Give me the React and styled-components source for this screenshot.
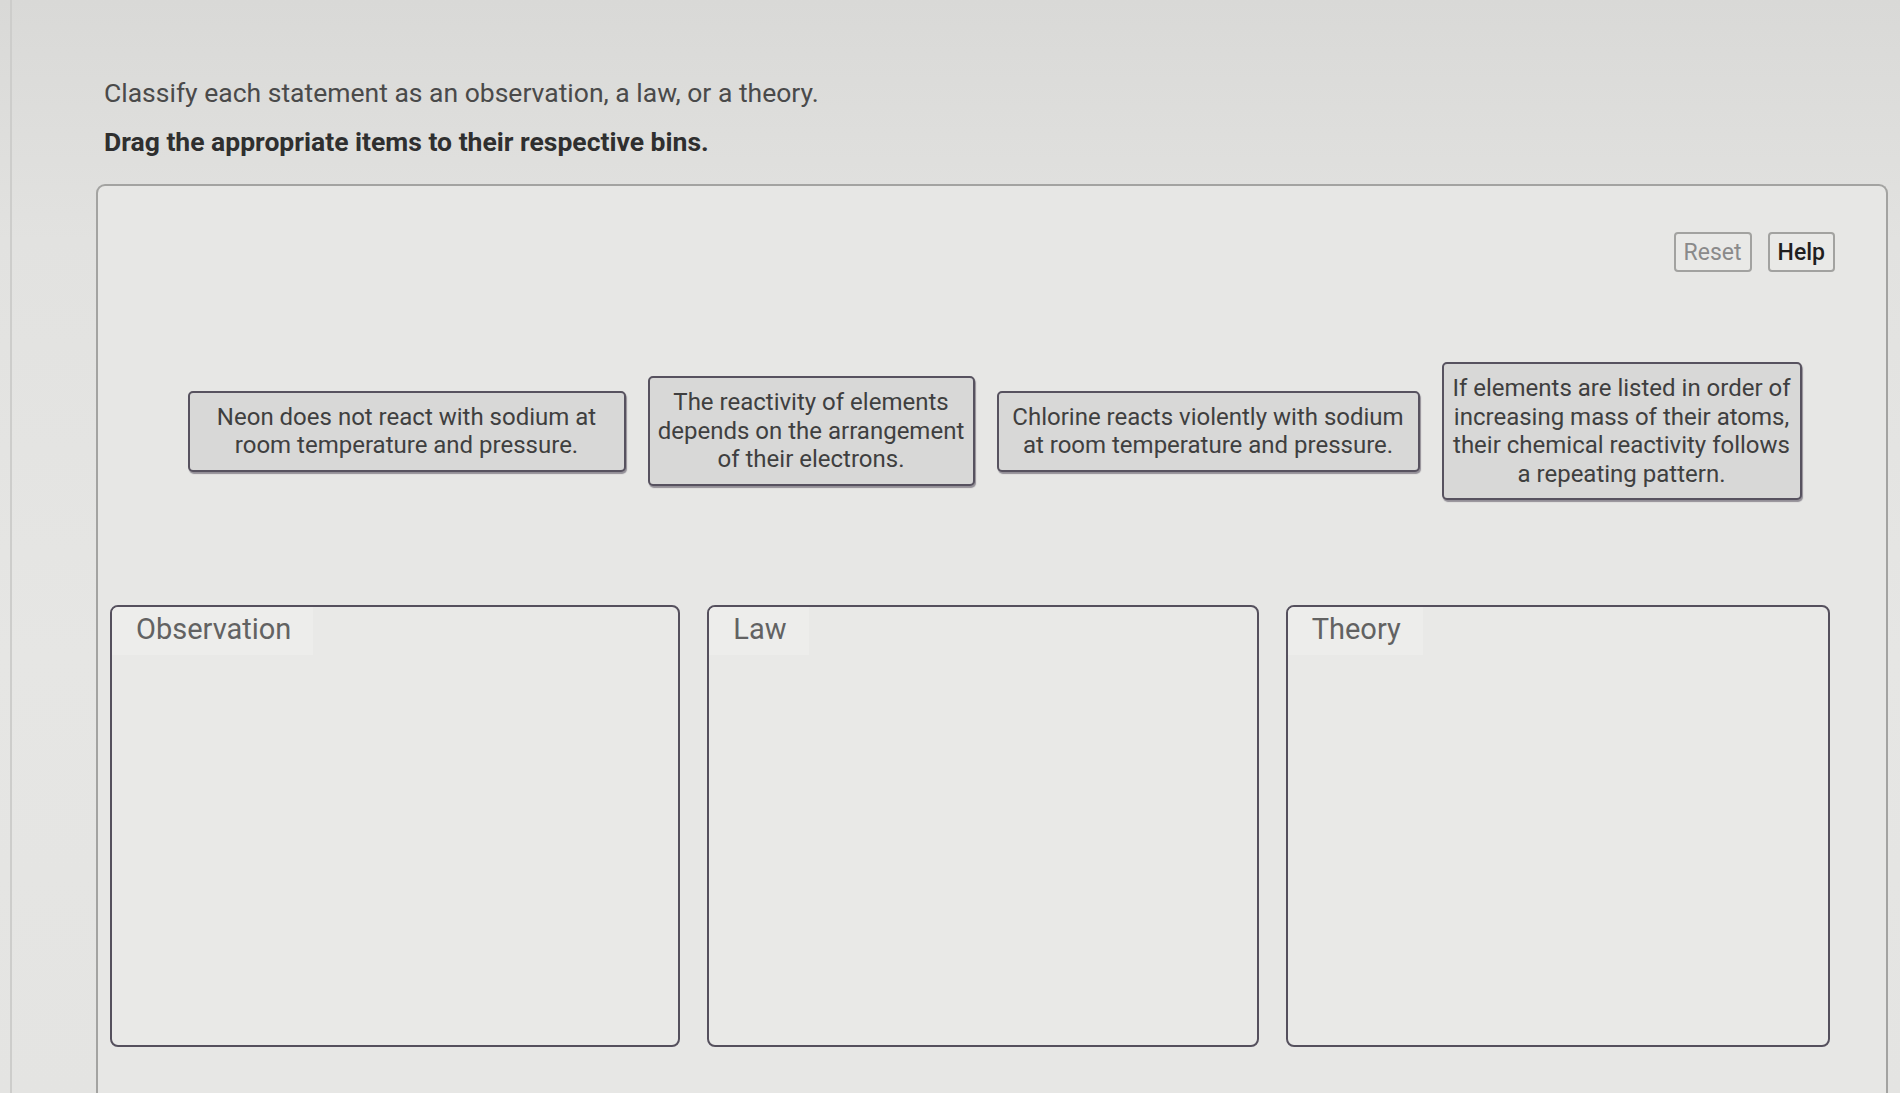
import React from "react";
import styled, { createGlobalStyle } from "styled-components";

const Global = createGlobalStyle`
  html, body { margin: 0; padding: 0; }
  body {
    font-family: Roboto, "Noto Sans", "Liberation Sans", sans-serif;
    background: linear-gradient(180deg, #d9d9d7 0%, #e2e2e0 22%, #e6e6e4 60%, #e4e4e2 100%);
    width: 1900px;
    height: 1093px;
    overflow: hidden;
  }
`;

const Page = styled.div`
  margin-left: 10px;
  border-left: 2px solid #cdcdcb;
  height: 1093px;
  box-sizing: border-box;
  padding-left: 84px;
  padding-top: 77px;
`;

const Prompt = styled.p`
  margin: 0 0 17px 8px;
  font-size: 26.5px;
  line-height: 32px;
  color: ${(p) => (p.$bold ? "#2f2f2f" : "#4a4a4a")};
  font-weight: ${(p) => (p.$bold ? 700 : 400)};
`;

const Panel = styled.section`
  margin-top: 26px;
  width: 1792px;
  height: 940px;
  box-sizing: border-box;
  border: 2px solid #a3a3a1;
  border-bottom: none;
  border-radius: 9px 9px 0 0;
  background: #e7e7e5;
  display: flex;
  flex-direction: column;
`;

const Toolbar = styled.div`
  display: flex;
  justify-content: flex-end;
  gap: 16px;
  padding: 46px 51px 0 0;
`;

const ToolButton = styled.button`
  height: 40px;
  padding: 0 8px;
  box-sizing: border-box;
  border: 2px solid #a2a2a0;
  border-radius: 4px;
  background: #e9e9e7;
  font-family: Roboto, "Liberation Sans", sans-serif;
  font-size: 23px;
  font-weight: ${(p) => (p.$muted ? 400 : 500)};
  color: ${(p) => (p.$muted ? "#8a8a8a" : "#1f1f1f")};
  cursor: pointer;
`;

const ItemRow = styled.div`
  display: flex;
  justify-content: center;
  align-items: center;
  gap: 22px;
  margin-top: 90px;
  padding-left: 5px;
`;

const Item = styled.div`
  width: ${(p) => p.$w}px;
  box-sizing: border-box;
  padding: 10px 6px;
  border: 2px solid #57525f;
  border-radius: 5px;
  background: #d8d8d7;
  box-shadow: 1px 2px 1px rgba(45, 35, 55, 0.45);
  text-align: center;
  font-size: 24px;
  line-height: 28.5px;
  color: #3f3f3f;
  white-space: nowrap;
`;

const Bins = styled.div`
  display: grid;
  grid-template-columns: 569fr 550fr 543fr;
  gap: 27px;
  margin-top: 105px;
  padding: 0 56px 0 12px;
`;

const Bin = styled.div`
  height: 442px;
  box-sizing: border-box;
  border: 2px solid #55505d;
  border-radius: 8px;
  background: #e9e9e7;
`;

const BinLabel = styled.div`
  display: inline-block;
  padding: 5px 22px 9px 24px;
  font-size: 29px;
  line-height: 34px;
  color: #626262;
  background: #ededeb;
  border-top-left-radius: 6px;
`;

const items = [
  { w: 438, lines: ["Neon does not react with sodium at", "room temperature and pressure."] },
  { w: 327, lines: ["The reactivity of elements", "depends on the arrangement", "of their electrons."] },
  { w: 423, lines: ["Chlorine reacts violently with sodium", "at room temperature and pressure."] },
  {
    w: 360,
    lines: [
      "If elements are listed in order of",
      "increasing mass of their atoms,",
      "their chemical reactivity follows",
      "a repeating pattern.",
    ],
  },
];

export default function App() {
  return (
    <>
      <Global />
      <Page>
        <Prompt>Classify each statement as an observation, a law, or a theory.</Prompt>
        <Prompt $bold>Drag the appropriate items to their respective bins.</Prompt>
        <Panel>
          <Toolbar>
            <ToolButton $muted>Reset</ToolButton>
            <ToolButton>Help</ToolButton>
          </Toolbar>
          <ItemRow>
            {items.map((it, i) => (
              <Item key={i} $w={it.w}>
                {it.lines.map((l, j) => (
                  <React.Fragment key={j}>
                    {l}
                    {j < it.lines.length - 1 && <br />}
                  </React.Fragment>
                ))}
              </Item>
            ))}
          </ItemRow>
          <Bins>
            <Bin><BinLabel>Observation</BinLabel></Bin>
            <Bin><BinLabel>Law</BinLabel></Bin>
            <Bin><BinLabel>Theory</BinLabel></Bin>
          </Bins>
        </Panel>
      </Page>
    </>
  );
}
